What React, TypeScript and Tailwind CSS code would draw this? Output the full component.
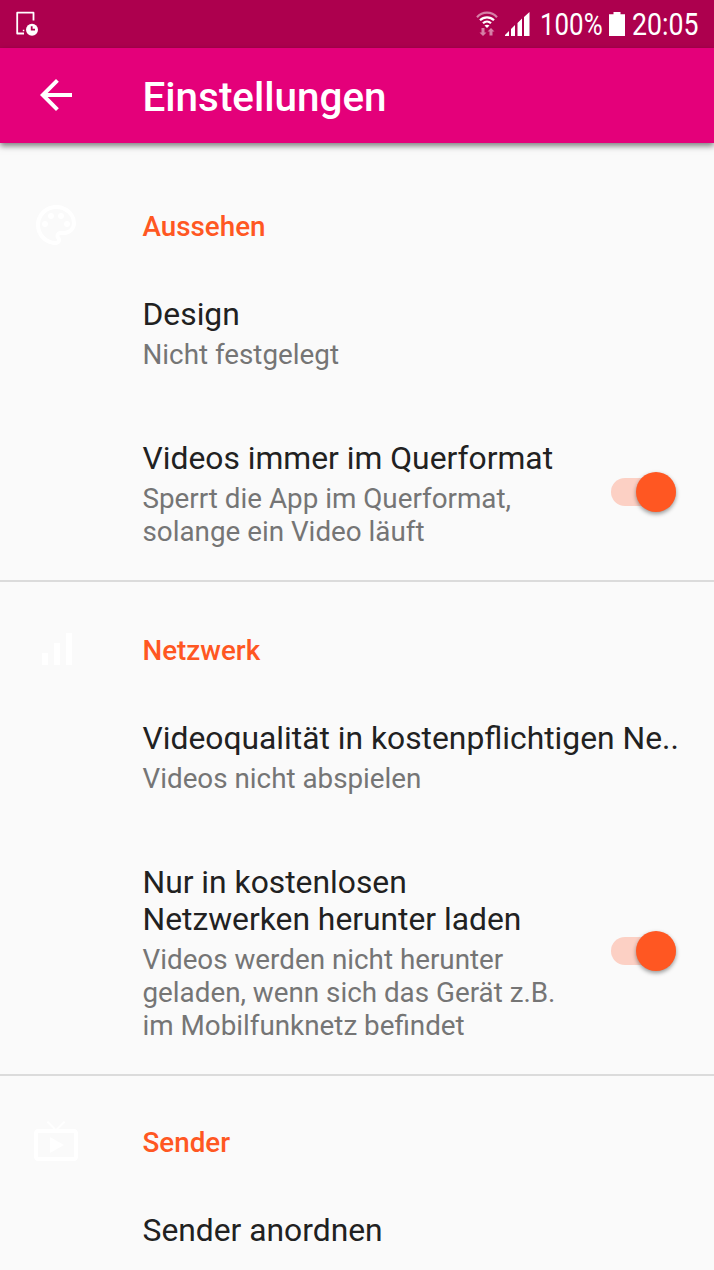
import type { ReactNode } from 'react';
import { MdArrowBack, MdOutlinePalette, MdSignalCellularAlt } from 'react-icons/md';

function TvIcon() {
  return (
    <svg width="48" height="48" viewBox="0 0 24 24" fill="currentColor">
      <path d="M21 6h-7.59l3.29-3.29L16 2l-4 4-4-4-.71.71L10.59 6H3c-1.1 0-2 .89-2 2v12c0 1.1.9 2 2 2h18c1.1 0 2-.9 2-2V8c0-1.11-.9-2-2-2zm0 14H3V8h18v12zM9 10v8l7-4z" />
    </svg>
  );
}

function StatusBar() {
  return (
    <div className="flex h-12 shrink-0 items-center bg-[#ad004e] pl-4 text-white">
      <svg width="24" height="26" viewBox="0 0 24 26" fill="none" className="shrink-0">
        <path d="M8 22.500H1.200V1.700H17.500V9.500" stroke="currentColor" strokeWidth="1.800" strokeLinejoin="round" />
        <path d="M6.800 19.500h1.500" stroke="currentColor" strokeWidth="1.500" />
        <circle cx="16" cy="18.700" r="6" fill="currentColor" />
        <path d="M15.700 15.300V18.700H19" stroke="#ad004e" strokeWidth="1.800" />
      </svg>
      <div className="grow" />
      <svg width="22" height="26" viewBox="0 0 22 26" fill="none" className="mr-[7px] shrink-0">
        <path d="M1 6.200C6.500 .2 15.500 .2 21 6.200" stroke="currentColor" strokeWidth="2.200" opacity=".5" />
        <path d="M4 9.300C8 5.300 14 5.300 18 9.300" stroke="currentColor" strokeWidth="2.200" />
        <path d="M7 12.300C9.300 10 12.700 10 15 12.300" stroke="currentColor" strokeWidth="2.200" />
        <path d="M8.500 14.500Q11 12.800 13.500 14.500L11 17z" fill="currentColor" />
        <path d="M5.500 17h3v4.500h2L7 25l-3.500-3.500h2zM13.500 24.500h3V20.500h2L15 17l-3.500 3.500h2z" fill="currentColor" opacity=".5" />
      </svg>
      <svg width="25" height="26" viewBox="0 0 25 26" fill="currentColor" className="mr-[9.5px] shrink-0">
        <path d="M0 25V24l4-4v5zM6 25V18l4-4v11zM12.500 25V12l4.500-4.500V25zM19 25V6L24.500 1v24z" />
      </svg>
      <span className="w-[69px] whitespace-nowrap pt-px text-[31px] leading-[48px]">
        <span className="inline-block origin-left scale-x-[.835]">100%</span>
      </span>
      <svg width="16" height="26" viewBox="0 0 16 26" fill="currentColor" className="mr-[7.5px] shrink-0">
        <path d="M4.500 1h7v2.200H16V25H0V3.200h4.500z" />
      </svg>
      <span className="w-[82px] whitespace-nowrap pt-px text-[31px] leading-[48px]">
        <span className="inline-block origin-left scale-x-[.86]">20:05</span>
      </span>
    </div>
  );
}

function Toggle() {
  return (
    <div className="mb-[5px] flex h-7 w-[65px] shrink-0 items-center justify-end rounded-full bg-[#fcd0c4]">
      <div className="size-10 shrink-0 rounded-full bg-[#ff5722] shadow-[0_2px_4px_rgba(0,0,0,0.4)]" />
    </div>
  );
}

function Category({ icon, title }: { icon: ReactNode; title: string }) {
  return (
    <div className="flex h-[97px] items-center pt-[21px] pl-[31.5px]">
      <span className="-mt-[3px] w-[111px] text-white">{icon}</span>
      <h2 className="text-[27.8px] leading-[33px] font-medium text-[#ff5722]">{title}</h2>
    </div>
  );
}

type PreferenceProps = { title: ReactNode; summary?: ReactNode; toggle?: boolean };

function Preference({ title, summary, toggle }: PreferenceProps) {
  return (
    <div className="flex min-h-36 items-center py-8 pr-[38.5px] pl-[142.5px]">
      <div className="grow self-start whitespace-nowrap">
        <div className="text-[31.8px] leading-[37px] text-[#212121]">{title}</div>
        {summary && <div className="mt-[5px] text-[27.8px] leading-[33px] text-[#757575]">{summary}</div>}
      </div>
      {toggle && <Toggle />}
    </div>
  );
}

export default function App() {
  return (
    <div className="flex h-[1270px] w-[714px] flex-col overflow-hidden bg-[#fafafa] font-[Roboto,sans-serif]">
      <StatusBar />
      <header className="z-10 flex h-[95px] shrink-0 items-center bg-[#e4007a] pl-[31.5px] text-white shadow-[0_3px_6px_rgba(0,0,0,0.5)]">
        <MdArrowBack size={48} className="-mt-px" />
        <h1 className="ml-[63px] pt-[3px] text-[40.4px] leading-[47px] font-medium">Einstellungen</h1>
      </header>
      <main className="pt-6">
        <section className="border-b-2 border-[#dbdbdb]">
          <Category icon={<MdOutlinePalette size={48} />} title="Aussehen" />
          <Preference title="Design" summary="Nicht festgelegt" />
          <Preference
            title="Videos immer im Querformat"
            summary={<>Sperrt die App im Querformat,<br />solange ein Video läuft</>}
            toggle
          />
        </section>
        <section className="border-b-2 border-[#dbdbdb] pt-[9px]">
          <Category icon={<MdSignalCellularAlt size={48} />} title="Netzwerk" />
          <Preference title="Videoqualität in kostenpflichtigen Ne.." summary="Videos nicht abspielen" />
          <Preference
            title={<>Nur in kostenlosen<br />Netzwerken herunter laden</>}
            summary={<>Videos werden nicht herunter<br />geladen, wenn sich das Gerät z.B.<br />im Mobilfunknetz befindet</>}
            toggle
          />
        </section>
        <section className="pt-[7px]">
          <Category icon={<TvIcon />} title="Sender" />
          <Preference title="Sender anordnen" />
        </section>
      </main>
    </div>
  );
}
